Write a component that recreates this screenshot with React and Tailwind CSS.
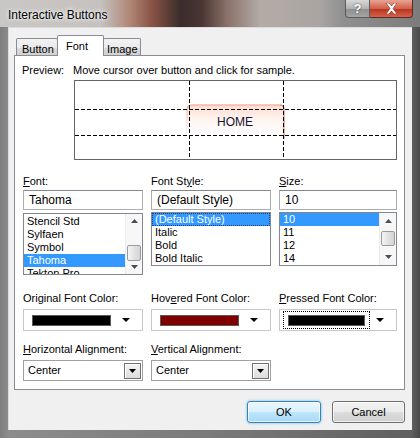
import React from 'react';

const fontList = ['Stencil Std', 'Sylfaen', 'Symbol', 'Tahoma', 'Tekton Pro'];
const styleList = ['(Default Style)', 'Italic', 'Bold', 'Bold Italic'];
const sizeList = ['10', '11', '12', '14'];

function Label({ pre = '', u, post = '' }) {
  return (
    <div className="h-[13px] leading-[13px] text-[11px] text-black whitespace-nowrap">
      {pre}
      <span className="underline underline-offset-[1px]">{u}</span>
      {post}
    </div>
  );
}

function UpArrow() {
  return (
    <svg width="7" height="4" viewBox="0 0 7 4">
      <path d="M0 4 L3.5 0 L7 4 Z" fill="#4d4d4d" />
    </svg>
  );
}

function DownArrow({ color = '#4d4d4d', w = 7, h = 4 }) {
  return (
    <svg width={w} height={h} viewBox={`0 0 ${w} ${h}`}>
      <path d={`M0 0 L${w} 0 L${w / 2} ${h} Z`} fill={color} />
    </svg>
  );
}

function ScrollBar({ thumbTop, thumbH }) {
  return (
    <div className="w-[17px] h-full flex flex-col bg-[#f7f7f7] border-l border-[#ececec]">
      <div className="h-[16px] flex items-center justify-center">
        <UpArrow />
      </div>
      <div className="flex-1 flex flex-col px-[1px]">
        <div style={{ height: thumbTop }} />
        <div
          className="rounded-[2px] border border-[#9b9b9b] bg-[linear-gradient(90deg,#f6f6f6,#e2e2e2_50%,#d4d4d4)]"
          style={{ height: thumbH }}
        />
      </div>
      <div className="h-[16px] flex items-center justify-center">
        <DownArrow />
      </div>
    </div>
  );
}

function ListBox({ items, selected, focus, offset = 0, height, scroll }) {
  return (
    <div
      className="border border-[#828790] bg-white flex overflow-hidden"
      style={{ height }}
    >
      <div className="flex-1 flex flex-col overflow-hidden" style={{ paddingTop: offset }}>
        {items.map((it, i) => (
          <div
            key={it}
            className={
              'h-[13px] shrink-0 leading-[13px] text-[11px] px-[3px] whitespace-nowrap ' +
              (i === selected
                ? 'bg-[#3399ff] text-white' + (focus ? ' outline-1 outline-dotted outline-[#1a3f8f] -outline-offset-1' : '')
                : 'text-black')
            }
          >
            {it}
          </div>
        ))}
      </div>
      {scroll && <ScrollBar thumbTop={scroll[0]} thumbH={scroll[1]} />}
    </div>
  );
}

function TextBox({ value }) {
  return (
    <div className="h-[20px] border border-[#abadb3] border-t-[#828790] bg-white px-[5px] flex items-center text-[12px] text-black">
      {value}
    </div>
  );
}

function ColorCombo({ color, focus }) {
  return (
    <div className="h-[22px] border border-[#c9c9c9] bg-white flex items-center pl-[4px] pr-[5px]">
      <div className={'flex-1 h-[16px] flex items-center px-[4px] ' + (focus ? 'outline-1 outline-dotted outline-black' : '')}>
        <div className="w-full h-[11px] border border-[#5a5a5a]" style={{ background: color }} />
      </div>
      <div className="w-[22px] flex items-center justify-center">
        <DownArrow color="#000" w={8} h={4} />
      </div>
    </div>
  );
}

function SelectBox({ value }) {
  return (
    <div className="h-[21px] border border-[#a0a0a0] bg-white flex items-center pl-[4px] pr-[1px]">
      <div className="flex-1 text-[11px] text-black">{value}</div>
      <div className="w-[17px] h-[16px] border border-[#707070] bg-[linear-gradient(#f4f4f4,#dcdcdc)] flex items-center justify-center shadow-[inset_1px_1px_0_#fff]">
        <DownArrow color="#000" w={7} h={4} />
      </div>
    </div>
  );
}

function Preview() {
  return (
    <div className="ml-[51px] mt-[3px] w-[323px] h-[80px] border border-[#646464] bg-white">
      <svg width="321" height="78" viewBox="0 0 321 78">
        <defs>
          <linearGradient id="bf" x1="0" y1="0" x2="0" y2="1">
            <stop offset="0" stopColor="#fcdcd0" />
            <stop offset="0.5" stopColor="#fff4f0" />
            <stop offset="1" stopColor="#ffffff" />
          </linearGradient>
          <linearGradient id="bsl" x1="0" y1="0" x2="0" y2="1">
            <stop offset="0" stopColor="#ee9a86" />
            <stop offset="1" stopColor="#ffffff" />
          </linearGradient>
        </defs>
        <path d="M112 53 L112 28 Q112 24 116 24 L205 24 Q209 24 209 28 L209 53 Z" fill="url(#bf)" />
        <path d="M112 53 L112 28 Q112 24 116 24 L205 24 Q209 24 209 28" fill="none" stroke="url(#bsl)" strokeWidth="1" />
        <path d="M205 24 Q209 24 209 28 L209 58" fill="none" stroke="#e7836c" strokeWidth="1.2" />
        <line x1="0" y1="28.5" x2="321" y2="28.5" stroke="#000" strokeDasharray="4 2" />
        <line x1="0" y1="54.5" x2="321" y2="54.5" stroke="#000" strokeDasharray="4 2" />
        <line x1="114.5" y1="0" x2="114.5" y2="78" stroke="#000" strokeDasharray="4 2" />
        <line x1="208.5" y1="0" x2="208.5" y2="78" stroke="#000" strokeDasharray="4 2" />
        <text x="160" y="45" textAnchor="middle" fontSize="12" fill="#141432" fontFamily="Liberation Sans, Arial, sans-serif">HOME</text>
      </svg>
    </div>
  );
}

function Tab({ label, active, w, pl }) {
  if (active) {
    return (
      <div
        className="relative z-10 -mx-[1px] h-[21px] pt-[2px] border border-b-0 border-[#898c95] bg-white rounded-t-[2px] text-[11px] text-black"
        style={{ width: w, paddingLeft: pl }}
      >
        {label}
      </div>
    );
  }
  return (
    <div
      className="h-[18px] pt-[2px] border border-b-0 border-[#898c95] bg-[linear-gradient(#f2f2f2,#ebebeb_50%,#dddddd_51%,#cfcfcf)] rounded-t-[2px] text-[11px] text-black"
      style={{ width: w, paddingLeft: pl }}
    >
      {label}
    </div>
  );
}

export default function App() {
  return (
    <div className="w-[420px] h-[438px] flex flex-col overflow-hidden bg-[linear-gradient(90deg,#7e7e7e,#8c8c8c_2%,#7a7a7a_50%,#5f5f5f_98%,#4a4a4a)] [font-family:'Liberation_Sans',Arial,sans-serif]">
      {/* title bar */}
      <div className="h-[27px] shrink-0 flex items-start justify-between bg-[linear-gradient(90deg,#c9c7c5_0%,#c5c1be_24%,#b08676_31%,#8b5546_36%,#3a2c2b_43%,#4a3533_48%,#8a7068_54%,#b3aba6_62%,#aaa5a2_76%,#8f8f8f_82%,#7c7c7c_100%)]">
        <div className="pl-[8px] pt-[6px] text-[12px] text-black [text-shadow:0_0_6px_#fff,0_0_3px_#fff]">Interactive Buttons</div>
        <div className="flex mr-[7px]">
          <div className="w-[25px] h-[18px] rounded-bl-[4px] border border-t-0 border-[#5b5b5b] bg-[linear-gradient(#d8d8d8,#b3b3b3_50%,#8e8e8e_51%,#a4a4a4)] flex items-center justify-center text-white text-[13px] font-bold [text-shadow:0_0_2px_#333]">
            ?
          </div>
          <div className="w-[43px] h-[18px] rounded-br-[4px] border border-t-0 border-l-0 border-[#5b2a22] bg-[linear-gradient(#e8a493,#d1614a_50%,#b8321c_51%,#d4624a)] flex items-center justify-center">
            <svg width="13" height="11" viewBox="0 0 13 11">
              <path d="M1 0 L4 0 L6.5 3 L9 0 L12 0 L8 5.5 L12 11 L9 11 L6.5 8 L4 11 L1 11 L5 5.5 Z" fill="#fff" stroke="#7a2416" strokeWidth="0.6" />
            </svg>
          </div>
        </div>
      </div>

      {/* client area */}
      <div className="mx-[8px] h-[403px] bg-[#f0f0f0] border-l border-t border-[#dcdcdc] flex flex-col">
        <div className="flex items-end ml-[7px] mt-[7px]">
          <Tab label="Button" w={42} pl={5} />
          <Tab label="Font" active w={47} pl={8} />
          <Tab label="Image" w={38} pl={3} />
        </div>

        <div className="-mt-[1px] ml-[5px] mr-[7px] h-[335px] border border-[#898c95] bg-white pl-[8px] pt-[8px]">
          <div className="flex items-center h-[13px] text-[11px] text-black">
            <div className="w-[51px] -ml-[1px]">Preview:</div>
            <div className="whitespace-nowrap">Move cursor over button and click for sample.</div>
          </div>
          <Preview />

          <div className="flex gap-[8px] mt-[15px]">
            <div className="w-[120px] flex flex-col">
              <Label u="F" post="ont:" />
              <div className="mt-[2px]"><TextBox value="Tahoma" /></div>
              <div className="mt-[3px]">
                <ListBox items={fontList} selected={3} offset={1} height={62} scroll={[17, 16]} />
              </div>
            </div>
            <div className="w-[120px] flex flex-col">
              <Label pre="Font St" u="y" post="le:" />
              <div className="mt-[2px]"><TextBox value="(Default Style)" /></div>
              <div className="mt-[2px]">
                <ListBox items={styleList} selected={0} focus height={54} />
              </div>
            </div>
            <div className="w-[118px] flex flex-col">
              <Label u="S" post="ize:" />
              <div className="mt-[2px]"><TextBox value="10" /></div>
              <div className="mt-[2px]">
                <ListBox items={sizeList} selected={0} height={54} scroll={[2, 15]} />
              </div>
            </div>
          </div>

          <div className="flex gap-[8px] mt-[17px]">
            <div className="w-[120px] flex flex-col">
              <Label pre="Ori" u="g" post="inal Font Color:" />
              <div className="mt-[4px]"><ColorCombo color="#000000" /></div>
            </div>
            <div className="w-[120px] flex flex-col">
              <Label pre="Hov" u="e" post="red Font Color:" />
              <div className="mt-[4px]"><ColorCombo color="#800000" /></div>
            </div>
            <div className="w-[118px] flex flex-col">
              <Label u="P" post="ressed Font Color:" />
              <div className="mt-[4px]"><ColorCombo color="#000000" focus /></div>
            </div>
          </div>

          <div className="flex gap-[8px] mt-[12px]">
            <div className="w-[120px] flex flex-col">
              <Label u="H" post="orizontal Alignment:" />
              <div className="mt-[4px]"><SelectBox value="Center" /></div>
            </div>
            <div className="w-[120px] flex flex-col">
              <Label u="V" post="ertical Alignment:" />
              <div className="mt-[4px]"><SelectBox value="Center" /></div>
            </div>
          </div>
        </div>

        <div className="flex justify-end gap-[11px] mr-[7px] mt-[11px]">
          <button className="w-[74px] h-[22px] rounded-[3px] border border-[#3c7fb1] bg-[linear-gradient(#eaf6fd,#d9f0fc_50%,#bee6fd_51%,#a7d9f5)] shadow-[0_0_3px_#5fc0f0,inset_0_0_0_1px_#ffffffaa] text-[11px] text-black">
            OK
          </button>
          <button className="w-[73px] h-[22px] rounded-[3px] border border-[#707070] bg-[linear-gradient(#f2f2f2,#ebebeb_50%,#dddddd_51%,#cfcfcf)] shadow-[inset_0_0_0_1px_#ffffffaa] text-[11px] text-black">
            Cancel
          </button>
        </div>
      </div>
    </div>
  );
}
